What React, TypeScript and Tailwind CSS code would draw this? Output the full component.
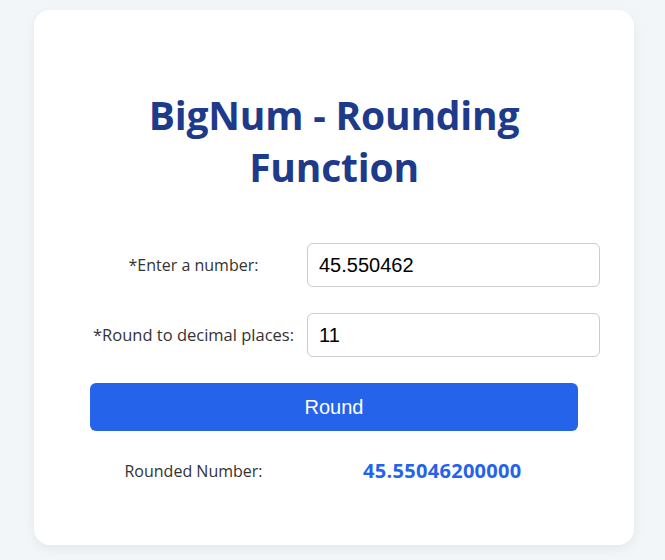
import React from "react";

export default function App() {
  const sans = { fontFamily: '"Open Sans", "Noto Sans", sans-serif' };
  const arial = { fontFamily: '"Liberation Sans", Arial, sans-serif' };
  return (
    <div className="min-h-screen bg-[#f3f6f9] pt-[10px]" style={sans}>
      <div className="ml-[34px] w-[600px] h-[535px] bg-white rounded-[16px] shadow-[0_4px_12px_rgba(0,0,0,0.06)] px-[56px] pt-[79px]">
        <h1 className="text-[39px] leading-[52px] font-bold text-center text-[#1e3a8a] px-[40px] tracking-[-0.2px]">
          BigNum - Rounding Function
        </h1>
        <div className="mt-[50px] flex items-center">
          <label className="w-[207px] shrink-0 text-center text-[16px] text-[#333]">*Enter a number:</label>
          <input
            readOnly
            value="45.550462"
            className="ml-[10px] w-[293px] h-[44px] shrink-0 border border-[#ccc] rounded-[6px] px-[11px] text-[20px] text-black outline-none"
            style={arial}
          />
        </div>
        <div className="mt-[26px] flex items-center">
          <label className="w-[207px] shrink-0 text-center text-[16.5px] text-[#333] whitespace-nowrap">*Round to decimal places:</label>
          <input
            readOnly
            value="11"
            className="ml-[10px] w-[293px] h-[44px] shrink-0 border border-[#ccc] rounded-[6px] px-[11px] text-[20px] text-black outline-none"
            style={arial}
          />
        </div>
        <button
          className="mt-[26px] w-full h-[48px] bg-[#2563eb] text-white rounded-[6px] text-[20px]"
          style={arial}
        >
          Round
        </button>
        <div className="mt-[25px] flex items-center">
          <div className="w-[207px] shrink-0 text-center text-[16px] text-[#333]">Rounded Number:</div>
          <div className="pl-[66px] text-[20px] font-bold text-[#2563eb] tracking-[0.3px]">45.55046200000</div>
        </div>
      </div>
    </div>
  );
}
